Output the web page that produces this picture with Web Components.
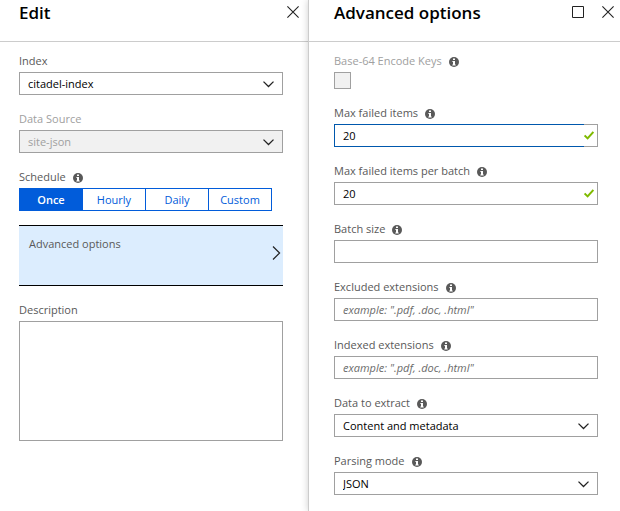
<!DOCTYPE html>
<html lang="en">
<head>
<meta charset="utf-8">
<title>Edit indexer</title>
<style>
  body {
    margin: 0;
    min-height: 100vh;
    display: grid;
    grid-template-columns: 308fr 312fr;
    background: #fff;
    color: #000;
    font-family: "Open Sans", "Noto Sans", sans-serif;
    font-size: 11px;
    line-height: 16px;
  }
</style>
</head>
<body>
  <blade-panel heading="Edit">
    <select-field label="Index" options="citadel-index"></select-field>
    <select-field label="Data Source" options="site-json" disabled></select-field>
    <choice-field label="Schedule" options="Once|Hourly|Daily|Custom" info></choice-field>
    <blade-link>Advanced options</blade-link>
    <area-field label="Description"></area-field>
  </blade-panel>
  <blade-panel heading="Advanced options" raised>
    <check-field label="Base-64 Encode Keys" info disabled></check-field>
    <text-field label="Max failed items" value="20" info valid active></text-field>
    <text-field label="Max failed items per batch" value="20" info valid></text-field>
    <text-field label="Batch size" info></text-field>
    <text-field label="Excluded extensions" hint='example: ".pdf, .doc, .html"' info></text-field>
    <text-field label="Indexed extensions" hint='example: ".pdf, .doc, .html"' info></text-field>
    <select-field label="Data to extract" options="Content and metadata|Storage metadata|All metadata" info></select-field>
    <select-field label="Parsing mode" options="JSON|Text|Default" info></select-field>
  </blade-panel>

<script>
  const INFO = `<svg class="info" width="10" height="10" viewBox="0 0 10 10" aria-hidden="true">
    <circle cx="5" cy="5" r="5" fill="#595959"/>
    <path d="M4 1.5h2v1.6H4zM3.4 4H6v3.4h.7v1H3.3v-1H4V5h-.6z" fill="#fff"/></svg>`;
  const CLOSE = `<svg width="12" height="12" viewBox="0 0 12 12" fill="none" stroke="#222" stroke-width="1.1"><path d="M.4.4l11.2 11.2M11.6.4L.4 11.6"/></svg>`;
  const SQUARE = `<svg width="12" height="12" viewBox="0 0 12 12" fill="none" stroke="#222"><path d="M.5.5h11v11H.5z"/></svg>`;

  const FIELD_CSS = `
    * { box-sizing: border-box; }
    :host { display: block; }
    .label { display: flex; align-items: center; gap: 7px; height: 16px; margin-bottom: 3px; color: #595959; white-space: nowrap; }
    .info { margin-top: 2px; flex: none; }
    :host([disabled]) label { color: #a0a0a0; }
    input, select, textarea, button { font: inherit; color: inherit; margin: 0; border-radius: 0; outline: none; }
    .box { display: flex; position: relative; height: 23px; }`;

  class Field extends HTMLElement {
    connectedCallback() {
      const root = this.attachShadow({ mode: "open" });
      const info = this.hasAttribute("info") ? INFO : "";
      root.innerHTML = `<style>${FIELD_CSS}${this.css()}</style>
        <div class="label"><label id="label" for="control"></label>${info}</div>${this.control()}`;
      root.getElementById("label").textContent = this.getAttribute("label");
      this.ready(root);
    }
    get options() { return this.getAttribute("options").split("|"); }
    get off() { return this.hasAttribute("disabled") ? "disabled" : ""; }
    css() { return ""; }
    ready() {}
  }

  customElements.define("select-field", class extends Field {
    css() {
      return `
        select { appearance: none; flex: 1; min-width: 0; padding: 0 28px 0 8px; border: 1px solid #a0a0a0; background: #fff; color: #000; }
        select:disabled { background: #f1f1f1; color: #a0a0a0; opacity: 1; }
        svg.arrow { position: absolute; right: 8px; top: 8px; pointer-events: none; }`;
    }
    control() {
      return `<div class="box"><select id="control" ${this.off}>${this.options.map(o => `<option>${o}</option>`).join("")}</select>
        <svg class="arrow" width="13" height="8" viewBox="0 0 13 8" fill="none" stroke="#222" stroke-width="1.3"><path d="M1.5 1.6l5 4.9 5-4.9"/></svg></div>`;
    }
  });

  customElements.define("text-field", class extends Field {
    css() {
      return `
        input { flex: 1; min-width: 0; padding: 0 8px; border: 1px solid #a0a0a0; border-right: 0; background: #fff; color: #000; }
        input::placeholder { color: #6b6b6b; font-style: italic; opacity: 1; }
        .tail { flex: none; display: flex; align-items: center; width: 14px; border: 1px solid #a0a0a0; border-left: 0; }
        :host([active]) input { border-color: #0058ad; }`;
    }
    control() {
      const tick = this.hasAttribute("valid")
        ? `<svg width="10" height="9" viewBox="0 0 10 9" fill="none" stroke="#7fba00" stroke-width="2"><path d="M.6 4.4l3 3L9.4.9"/></svg>` : "";
      return `<div class="box"><input id="control" type="text"><span class="tail">${tick}</span></div>`;
    }
    ready(root) {
      const input = root.getElementById("control");
      input.value = this.getAttribute("value") || "";
      input.placeholder = this.getAttribute("hint") || "";
    }
  });

  customElements.define("check-field", class extends Field {
    css() {
      return `input { display: block; appearance: none; width: 17px; height: 17px; border: 1px solid #a0a0a0; background: #fff; }
        input:disabled { background: #f1f1f1; }`;
    }
    control() { return `<input id="control" type="checkbox" ${this.off}>`; }
  });

  customElements.define("area-field", class extends Field {
    css() {
      return `textarea { display: block; width: 100%; height: 120px; padding: 4px 8px; border: 1px solid #a0a0a0; background: #fff; color: #000; resize: none; }`;
    }
    control() { return `<textarea id="control"></textarea>`; }
  });

  customElements.define("choice-field", class extends Field {
    css() {
      return `
        .group { display: grid; grid-template-columns: repeat(4, 1fr); max-width: 253px; height: 23px; border: 1px solid #015cda; border-left: 0; }
        button { padding: 0; border: 0; border-left: 1px solid #015cda; background: #fff; color: #015cda; }
        button[aria-pressed="true"] { background: #015cda; color: #fff; font-weight: 600; }`;
    }
    control() {
      return `<div class="group" role="group" aria-labelledby="label">${this.options.map((o, i) =>
        `<button type="button" aria-pressed="${i === 0}">${o}</button>`).join("")}</div>`;
    }
    ready(root) {
      root.getElementById("label").removeAttribute("for");
      const buttons = root.querySelectorAll("button");
      buttons.forEach(b => b.addEventListener("click", () =>
        buttons.forEach(x => x.setAttribute("aria-pressed", x === b))));
    }
  });

  customElements.define("blade-link", class extends HTMLElement {
    connectedCallback() {
      this.attachShadow({ mode: "open" }).innerHTML = `<style>
        :host { display: block; }
        button { box-sizing: border-box; display: flex; justify-content: space-between; width: 100%; height: 61px; margin: 0;
          padding: 10px 2px 0 10px; border: solid #000; border-width: 1px 0; background: #dcedfe; color: #595959; font: inherit; text-align: left; }
        svg { margin-top: 9px; }
        </style><button type="button"><slot></slot>
        <svg width="9" height="16" viewBox="0 0 9 16" fill="none" stroke="#222" stroke-width="1.2"><path d="M1 1.5L7.6 8 1 14.5"/></svg></button>`;
    }
  });

  customElements.define("blade-panel", class extends HTMLElement {
    connectedCallback() {
      const raised = this.hasAttribute("raised");
      this.attachShadow({ mode: "open" }).innerHTML = `<style>
        * { box-sizing: border-box; }
        :host { display: block; min-width: 0; background: #fff; }
        :host([raised]) { position: relative; border-left: 1px solid #ccc; box-shadow: 0 0 7px rgba(0, 0, 0, .2); }
        header { display: flex; justify-content: space-between; height: 42px; padding: 0 9px 0 19px; border-bottom: 1px solid #ccc; }
        h2 { margin: 0; font-size: 17px; line-height: 25px; font-weight: 600; white-space: nowrap; }
        nav { display: flex; gap: 18px; padding-top: 6px; }
        nav button { display: block; height: 12px; margin: 0; padding: 0; border: 0; background: none; }
        nav svg { display: block; }
        .body { display: flex; flex-direction: column; gap: 16px; padding: 11px 25px 16px 19px; }
        ::slotted(blade-link) { margin-top: -2px; }
        :host([raised]) header { padding: 0 6px 0 25px; }
        :host([raised]) .body { padding: 11px 22px 16px 25px; }
        </style>
        <header><h2></h2><nav>${raised ? `<button type="button" aria-label="Maximize">${SQUARE}</button>` : ""}
        <button type="button" aria-label="Close">${CLOSE}</button></nav></header>
        <div class="body"><slot></slot></div>`;
      this.shadowRoot.querySelector("h2").textContent = this.getAttribute("heading");
    }
  });
</script>
</body>
</html>
